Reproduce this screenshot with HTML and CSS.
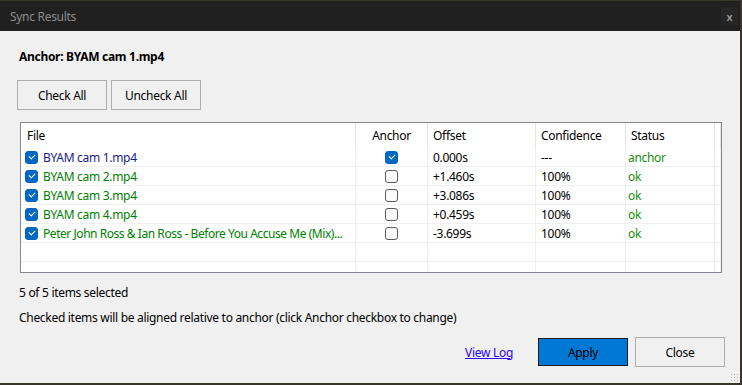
FILE: index.html
```html
<!DOCTYPE html>
<html lang="en">
<head>
  <meta charset="UTF-8" />
  <title>Sync Results</title>
  <link rel="stylesheet" href="styles.css">
</head>
<body>
  <div class="window">
    <div class="titlebar">
      <span class="title">Sync Results</span>
      <span class="close-x">x</span>
    </div>

    <div class="content">
      <div class="anchor-label">Anchor: BYAM cam 1.mp4</div>

      <div class="top-buttons">
        <button class="btn">Check All</button>
        <button class="btn">Uncheck All</button>
      </div>

      <div class="list">
        <div class="row header">
          <div class="cell">File</div>
          <div class="cell center">Anchor</div>
          <div class="cell">Offset</div>
          <div class="cell">Confidence</div>
          <div class="cell">Status</div>
          <div class="cell"></div>
        </div>

        <div class="row">
          <div class="cell file anchor-file"><span class="cb on"></span>BYAM cam 1.mp4</div>
          <div class="cell center"><span class="cb on"></span></div>
          <div class="cell">0.000s</div>
          <div class="cell">---</div>
          <div class="cell status">anchor</div>
          <div class="cell"></div>
        </div>
        <div class="row">
          <div class="cell file"><span class="cb on"></span>BYAM cam 2.mp4</div>
          <div class="cell center"><span class="cb"></span></div>
          <div class="cell">+1.460s</div>
          <div class="cell">100%</div>
          <div class="cell status">ok</div>
          <div class="cell"></div>
        </div>
        <div class="row">
          <div class="cell file"><span class="cb on"></span>BYAM cam 3.mp4</div>
          <div class="cell center"><span class="cb"></span></div>
          <div class="cell">+3.086s</div>
          <div class="cell">100%</div>
          <div class="cell status">ok</div>
          <div class="cell"></div>
        </div>
        <div class="row">
          <div class="cell file"><span class="cb on"></span>BYAM cam 4.mp4</div>
          <div class="cell center"><span class="cb"></span></div>
          <div class="cell">+0.459s</div>
          <div class="cell">100%</div>
          <div class="cell status">ok</div>
          <div class="cell"></div>
        </div>
        <div class="row">
          <div class="cell file long"><span class="cb on"></span>Peter John Ross &amp; Ian Ross - Before You Accuse Me (Mix)...</div>
          <div class="cell center"><span class="cb"></span></div>
          <div class="cell">-3.699s</div>
          <div class="cell">100%</div>
          <div class="cell status">ok</div>
          <div class="cell"></div>
        </div>
        <div class="row empty">
          <div class="cell"></div><div class="cell"></div><div class="cell"></div>
          <div class="cell"></div><div class="cell"></div><div class="cell"></div>
        </div>
        <div class="row empty last">
          <div class="cell"></div><div class="cell"></div><div class="cell"></div>
          <div class="cell"></div><div class="cell"></div><div class="cell"></div>
        </div>
      </div>

      <div class="info">5 of 5 items selected</div>
      <div class="info hint">Checked items will be aligned relative to anchor (click Anchor checkbox to change)</div>

      <div class="bottom">
        <a class="link" href="#">View Log</a>
        <button class="btn primary">Apply</button>
        <button class="btn">Close</button>
      </div>
    </div>
    <div class="grip"></div>
  </div>
</body>
</html>
```

FILE: styles.css
```css
body {
  margin: 0;
  background: #3a352b;
  font-family: "Noto Sans", sans-serif;
  font-size: 12px;
  letter-spacing: -0.3px;
  color: #000;
}

.window {
  position: relative;
  margin-top: 1px;
  width: 740px;
  height: 382px;
  background: #f0f0f0;
  display: flex;
  flex-direction: column;
}

.titlebar {
  height: 30px;
  background: #202020;
  display: flex;
  align-items: center;
  justify-content: space-between;
  padding-left: 10px;
}

.title {
  color: #8c8c8c;
  font-size: 12px;
}

.close-x {
  width: 17px;
  height: 19px;
  margin-right: 2px;
  background: #262626;
  color: #9a9a9a;
  font-size: 11px;
  font-weight: 600;
  display: flex;
  align-items: center;
  justify-content: center;
}

.content {
  padding: 0 15px 0 17px;
  display: flex;
  flex-direction: column;
}

.anchor-label {
  font-weight: 700;
  margin: 18px 0 0 2px;
  height: 16px;
  line-height: 16px;
}

.top-buttons {
  display: flex;
  gap: 4px;
  margin-top: 15px;
}

.btn {
  font-family: inherit;
  font-size: 12px;
  letter-spacing: inherit;
  color: #000;
  background: #f0f0f0;
  border: 1px solid #adadad;
  width: 90px;
  height: 30px;
  padding: 0;
  cursor: pointer;
}

.list {
  margin: 12px 0 0 3px;
  width: 700px;
  height: 149px;
  background: #fff;
  border: 1px solid #828790;
  overflow: hidden;
}

.row {
  display: grid;
  grid-template-columns: 335px 72px 108px 90px 89px 1fr;
  height: 18px;
  border-bottom: 1px solid #f0f0f0;
}

.row.header {
  height: 25px;
  border-bottom: none;
}

.row.header .cell {
  border-right-color: #e5e5e5;
}

.row.empty.last {
  border-bottom: none;
}

.cell {
  display: flex;
  align-items: center;
  padding-left: 5px;
  border-right: 1px solid #f0f0f0;
  white-space: nowrap;
  overflow: hidden;
}

.cell.center {
  justify-content: center;
  padding-left: 0;
}

.cell.file {
  padding-left: 4px;
  color: #008000;
  gap: 5px;
}

.cell.file.long {
  letter-spacing: -0.45px;
}

.cell.anchor-file {
  color: #1a1a8c;
}

.cell.status {
  padding-left: 2px;
  color: #16900e;
}

.row.header .cell:first-child {
  padding-left: 6px;
}

.cb {
  flex: none;
  width: 11px;
  height: 11px;
  border: 1px solid #5c5c5c;
  border-radius: 3px;
  background: #fbfbfb;
  position: relative;
}

.cb.on {
  background: #0067c0;
  border-color: #0067c0;
}

.cb.on::after {
  content: "";
  position: absolute;
  left: 3px;
  top: 2px;
  width: 5px;
  height: 3px;
  border-left: 1px solid #fff;
  border-bottom: 1px solid #fff;
  transform: rotate(-45deg);
}

.info {
  margin: 12px 0 0 2px;
  height: 16px;
  line-height: 16px;
}

.info.hint {
  margin-top: 9px;
}

.bottom {
  display: flex;
  align-items: center;
  justify-content: flex-end;
  margin-top: 11px;
  gap: 7px;
}

.link {
  color: #2a00ff;
  margin-right: 18px;
}

.btn.primary {
  background: #0078d4;
  border-color: #1a1a1a;
  height: 28px;
}

.grip {
  position: absolute;
  right: 2px;
  bottom: 2px;
  width: 8px;
  height: 8px;
  background-image: radial-gradient(circle, #b5b5b5 0.8px, transparent 1px);
  background-size: 3px 3px;
}
```
